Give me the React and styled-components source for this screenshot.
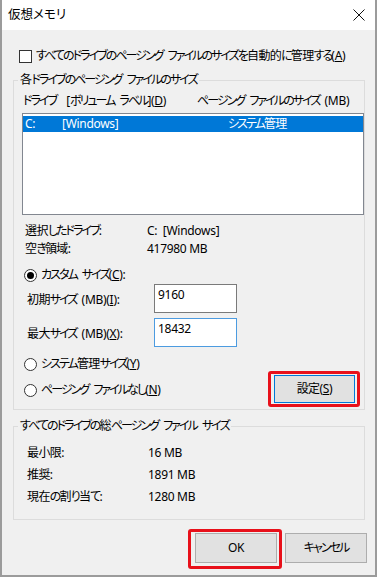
import React from "react";
import styled, { createGlobalStyle } from "styled-components";

const Global = createGlobalStyle`
  html, body { margin: 0; padding: 0; background: #ffffff; }
  body {
    font-family: "Noto Sans", "Noto Sans CJK JP", sans-serif;
    font-size: 12px;
    color: #000;
  }
  * { box-sizing: border-box; }
`;

const Window = styled.div`
  width: 377px;
  height: 577px;
  background: #f0f0f0;
  border: 2px solid #9b9b9b;
  border-top: none;
  display: flex;
  flex-direction: column;
  font-feature-settings: "palt";
  line-height: 16px;
  letter-spacing: -0.3px;
`;

const JText = styled.span`
  word-spacing: 2.2px;
`;

const Kana = styled.span`
  letter-spacing: -1.95px;
`;

const Kanji = styled.span`
  letter-spacing: -0.6px;
`;

function J({ t }) {
  const parts = t
    .split(/(&.|[\u3040-\u30ff]+|[\u4e00-\u9fff]+)/)
    .filter(Boolean);
  return (
    <JText>
      {parts.map((p, i) => {
        if (p[0] === "&" && p.length === 2) return <u key={i}>{p[1]}</u>;
        if (/[\u3040-\u30ff]/.test(p)) return <Kana key={i}>{p}</Kana>;
        if (/[\u4e00-\u9fff]/.test(p)) return <Kanji key={i}>{p}</Kanji>;
        return <React.Fragment key={i}>{p}</React.Fragment>;
      })}
    </JText>
  );
}

const TitleBar = styled.div`
  height: 30px;
  flex: none;
  background: #ffffff;
  display: flex;
  align-items: center;
  justify-content: space-between;
  padding: 0 10px 0 6px;
  font-size: 12.5px;
  letter-spacing: 0;
`;

const Content = styled.div`
  padding: 17px 10px 0 11px;
  display: flex;
  flex-direction: column;
`;

const OptionRow = styled.div`
  display: flex;
  align-items: center;
  height: 18px;
  gap: 4px;
  padding-left: ${(p) => p.$indent || 0}px;
  margin-top: ${(p) => p.$mt || 0}px;
  white-space: nowrap;
`;

const CheckBox = styled.span`
  width: 13px;
  height: 13px;
  background: #fff;
  border: 1px solid #333;
  flex: none;
`;

const Radio = styled.span`
  width: 13px;
  height: 13px;
  border-radius: 50%;
  background: #fff;
  border: 1px solid #333;
  flex: none;
  display: flex;
  align-items: center;
  justify-content: center;
  &::after {
    content: "";
    width: 7px;
    height: 7px;
    border-radius: 50%;
    background: ${(p) => (p.$checked ? "#000" : "transparent")};
  }
`;

const Group = styled.fieldset`
  margin: ${(p) => p.$mt}px 0 0 0;
  padding: 0;
  border: 1px solid #dcdcdc;
  min-width: 0;
`;

const Legend = styled.legend`
  margin-left: 4px;
  padding: 0 2px;
  line-height: 16px;
  height: 16px;
  white-space: nowrap;
`;

const GroupInner = styled.div`
  padding: ${(p) => p.$pad};
  display: flex;
  flex-direction: column;
`;

const ListHeader = styled.div`
  display: grid;
  grid-template-columns: 174px 1fr;
  height: 16px;
  padding-left: 1px;
  white-space: nowrap;
`;

const ListBox = styled.div`
  margin-top: 4px;
  height: 102px;
  background: #fff;
  border: 1px solid #828790;
  padding-top: 2px;
`;

const ListRow = styled.div`
  height: 16px;
  background: #0078d7;
  color: #fff;
  display: grid;
  grid-template-columns: 37px 166px 1fr;
  padding-left: 2px;
  white-space: nowrap;
`;

const InfoGrid = styled.div`
  margin-top: ${(p) => p.$mt}px;
  display: grid;
  grid-template-columns: ${(p) => p.$col}px 1fr;
  grid-auto-rows: 18px;
  row-gap: ${(p) => p.$gap}px;
  align-items: center;
  padding-left: ${(p) => p.$indent}px;
  white-space: nowrap;
`;

const SizeRow = styled.div`
  margin-top: ${(p) => p.$mt}px;
  display: grid;
  grid-template-columns: 132px 83px;
  align-items: start;
`;

const SizeLabel = styled.span`
  padding: 8px 0 0 5px;
  white-space: nowrap;
`;

const TextBox = styled.div`
  width: 83px;
  height: 29px;
  background: #fff;
  border: 1px solid ${(p) => p.$border};
  padding: 2px 3px;
  line-height: 16px;
`;

const BottomSection = styled.div`
  display: flex;
  justify-content: space-between;
  align-items: flex-start;
  padding-right: 4px;
`;

const RadioStack = styled.div`
  padding-top: 8px;
  display: flex;
  flex-direction: column;
  gap: 8px;
`;

const Highlight = styled.div`
  margin-top: ${(p) => p.$mt || 0}px;
  border: 3px solid #e8101a;
  border-radius: 3px;
  padding: ${(p) => p.$pad};
  display: flex;
`;

const Button = styled.div`
  width: ${(p) => p.$w}px;
  height: ${(p) => p.$h}px;
  margin-top: ${(p) => p.$mt || 0}px;
  background: #e1e1e1;
  border: 1px solid ${(p) => (p.$focus ? "#0078d7" : "#adadad")};
  display: flex;
  align-items: center;
  justify-content: center;
  white-space: nowrap;
`;

const ButtonRow = styled.div`
  margin-top: 9px;
  margin-right: -2px;
  display: flex;
  justify-content: flex-end;
  align-items: flex-start;
  gap: 3px;
`;

const CloseIcon = () => (
  <svg width="12" height="12" viewBox="0 0 12 12">
    <path d="M0.5 0.5 L11.5 11.5 M11.5 0.5 L0.5 11.5" stroke="#111" strokeWidth="1" fill="none" />
  </svg>
);

export default function App() {
  return (
    <>
      <Global />
      <Window>
        <TitleBar>
          <span>仮想メモリ</span>
          <CloseIcon />
        </TitleBar>
        <Content>
          <OptionRow $indent={6}>
            <CheckBox />
            <J t="すべてのドライブのページング ファイルのサイズを自動的に管理する(&A)" />
          </OptionRow>

          <Group $mt={7}>
            <Legend>
              <J t="各ドライブのページング ファイルのサイズ" />
            </Legend>
            <GroupInner $pad="5px 0 2px 8px">
              <ListHeader>
                <J t={"ドライブ\u00a0 [ボリューム ラベル](&D)"} />
                <J t="ページング ファイルのサイズ (MB)" />
              </ListHeader>
              <ListBox>
                <ListRow>
                  <span>C:</span>
                  <span>[Windows]</span>
                  <J t="システム管理" />
                </ListRow>
              </ListBox>

              <InfoGrid $mt={7} $col={122} $gap={0} $indent={3}>
                <J t="選択したドライブ:" />
                <span>C:&nbsp; [Windows]</span>
                <J t="空き領域:" />
                <span>417980 MB</span>
              </InfoGrid>

              <OptionRow $indent={2} $mt={8}>
                <Radio $checked />
                <J t="カスタム サイズ(&C):" />
              </OptionRow>

              <SizeRow $mt={0}>
                <SizeLabel>
                  <J t="初期サイズ (MB)(&I):" />
                </SizeLabel>
                <TextBox $border="#7a7a7a">9160</TextBox>
              </SizeRow>
              <SizeRow $mt={5}>
                <SizeLabel>
                  <J t="最大サイズ (MB)(&X):" />
                </SizeLabel>
                <TextBox $border="#4c9be0">18432</TextBox>
              </SizeRow>

              <BottomSection>
                <RadioStack>
                  <OptionRow $indent={2}>
                    <Radio />
                    <J t="システム管理サイズ(&Y)" />
                  </OptionRow>
                  <OptionRow $indent={2}>
                    <Radio />
                    <J t="ページング ファイルなし(&N)" />
                  </OptionRow>
                </RadioStack>
                <Highlight $mt={24} $pad="1px 2px 1px 3px">
                  <Button $w={81} $h={28} $focus>
                    <J t="設定(&S)" />
                  </Button>
                </Highlight>
              </BottomSection>
            </GroupInner>
          </Group>

          <Group $mt={8}>
            <Legend>
              <J t="すべてのドライブの総ページング ファイル サイズ" />
            </Legend>
            <GroupInner $pad="10px 0 13px 13px">
              <InfoGrid $mt={0} $col={121} $gap={4} $indent={0}>
                <J t="最小限:" />
                <span>16 MB</span>
                <J t="推奨:" />
                <span>1891 MB</span>
                <J t="現在の割り当て:" />
                <span>1280 MB</span>
              </InfoGrid>
            </GroupInner>
          </Group>

          <ButtonRow>
            <Highlight $pad="1px 2px 3px 4px">
              <Button $w={82} $h={30}>OK</Button>
            </Highlight>
            <Button $w={82} $h={30} $mt={4}>
              <J t="キャンセル" />
            </Button>
          </ButtonRow>
        </Content>
      </Window>
    </>
  );
}
